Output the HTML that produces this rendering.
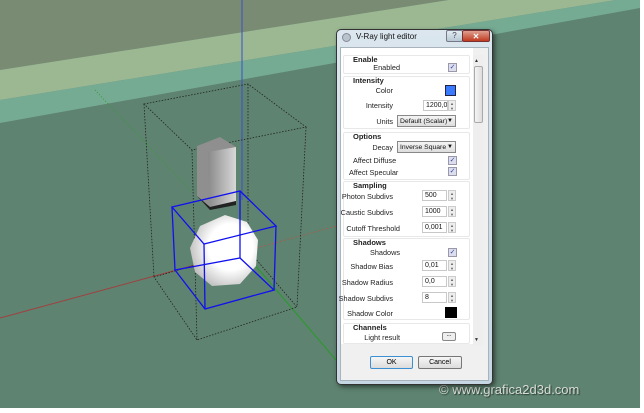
<!DOCTYPE html>
<html><head><style>
*{margin:0;padding:0;box-sizing:border-box}
body{width:644px;height:413px;background:#fff;position:relative;overflow:hidden;font-family:"Liberation Sans",sans-serif}
.a{position:absolute}
.lb{position:absolute;font-size:7.3px;color:#222;text-align:right;width:100px;white-space:nowrap}
.hd{position:absolute;left:353px;font-size:7.5px;font-weight:bold;color:#222}
.grp{position:absolute;left:343px;width:127px;border:1px solid #e8e8e8;border-radius:2px}
.fld{position:absolute;left:422px;width:25px;height:11px;border:1px solid #c8c8c8;background:#fff;font-size:7px;padding:1px 0 0 2px;color:#111;white-space:nowrap;overflow:hidden}
.sp{position:absolute;left:448px;width:8px;height:11px;border:1px solid #ccc;background:#eee;font-size:4px;line-height:5px;text-align:center;color:#666}
.cb{position:absolute;left:448px;width:9px;height:9px;border:1px solid #99a;background:#dde;font-size:7px;line-height:8px;text-align:center;color:#2a4aa0}
.dd{position:absolute;left:397px;width:59px;height:12px;border:1px solid #888;background:linear-gradient(#f4f4f4,#ddd);font-size:6.8px;padding:2px 0 0 2px;color:#111;white-space:nowrap;overflow:hidden}
.dd:after{content:"▼";position:absolute;right:2px;top:2px;font-size:6px;background:#e6e6e6}
.btn{position:absolute;top:356px;height:13px;border:1px solid #777;border-radius:2px;background:linear-gradient(#f6f6f6,#dcdcdc);font-size:7px;text-align:center;line-height:11px}
</style></head><body>
<svg class="a" style="left:0;top:0" width="640" height="408">
<defs>
<radialGradient id="sg" cx="0.6" cy="0.45" r="0.65"><stop offset="0.5" stop-color="#fff"/><stop offset="1" stop-color="#b8b8b8"/></radialGradient>
<linearGradient id="cg" x1="0" x2="1"><stop offset="0" stop-color="#8a8a8a"/><stop offset="1" stop-color="#d8d8d8"/></linearGradient>
</defs>
<rect width="640" height="408" fill="#5e8370"/>
<polygon points="0,0 640,0 640,-30 340,17 0,70" fill="#7a8b73"/>
<polygon points="0,70 340,17 640,-30 640,-4 340,45 0,100" fill="#9cb893"/>
<polygon points="0,100 340,45 640,-4 640,8 340,62 0,123" fill="#76ab93"/>
<line x1="0" y1="318" x2="195" y2="265" stroke="#a04040" stroke-width="1"/>
<line x1="195" y1="265" x2="340" y2="225" stroke="#a06050" stroke-dasharray="2,2"/>
<line x1="95" y1="90" x2="192" y2="192" stroke="#3a9a3a" stroke-dasharray="1,2"/>
<line x1="255" y1="265" x2="336" y2="360" stroke="#2a9a2a"/>
<line x1="242" y1="0" x2="242" y2="200" stroke="#3a50c8"/>
<g fill="none" stroke="#222" stroke-dasharray="1.5,1.5" stroke-width=".8">
<polygon points="144,104 248,84 306,127 192,150"/>
<polygon points="154,277 248,250 297,307 197,340"/>
<line x1="144" y1="104" x2="154" y2="277"/><line x1="192" y1="150" x2="197" y2="340"/>
<line x1="306" y1="127" x2="297" y2="307"/><line x1="248" y1="84" x2="248" y2="250"/>
</g>
<polygon points="197,146 220,137 236,147 236,201 210,207 197,196" fill="#8f8f8f"/>
<polygon points="208,152 236,147 236,201 210,207" fill="url(#cg)"/>
<polygon points="197,196 210,207 236,201 236,205 210,210" fill="#222"/>
<polygon points="225,215 247,222 258,240 256,266 240,284 212,286 195,272 190,248 200,226" fill="url(#sg)"/>
<g fill="none" stroke="#1010f0" stroke-width="1.3">
<polygon points="172,207 240,191 276,226 204,244"/>
<polygon points="175,270 240,258 274,290 205,309"/>
<line x1="172" y1="207" x2="175" y2="270"/><line x1="204" y1="244" x2="205" y2="309"/>
<line x1="276" y1="226" x2="274" y2="290"/><line x1="240" y1="191" x2="240" y2="258"/>
</g>
</svg>
<div class="a" style="left:439px;top:382px;font-size:13px;color:#d8dcd8;text-shadow:1px 1px 1px #2a3a30">© www.grafica2d3d.com</div>
<div class="a" style="left:336px;top:29px;width:157px;height:356px;border:1px solid #333;border-radius:5px;background:linear-gradient(#dbe6ee,#c6d6e2);box-shadow:2px 2px 5px rgba(0,0,0,.5)"></div>
<div class="a" style="left:342px;top:33px;width:9px;height:9px;border-radius:50%;background:#b8c4cc;border:1px solid #889"></div>
<div class="a" style="left:356px;top:32px;font-size:8px;color:#111">V-Ray light editor</div>
<div class="a" style="left:446px;top:30px;width:17px;height:12px;border:1px solid #778;border-radius:2px;background:linear-gradient(#e4ecf2,#b8c8d4);font-size:8px;text-align:center;color:#445">?</div>
<div class="a" style="left:462px;top:30px;width:28px;height:12px;border:1px solid #733;border-radius:2px;background:linear-gradient(#e0a090,#c03a20);font-size:8px;text-align:center;color:#fff;font-weight:bold;line-height:11px">✕</div>
<div class="a" style="left:340px;top:47px;width:149px;height:334px;background:#f0f0f0;border:1px solid #a8b4bc"></div>
<div class="a" style="left:341px;top:48px;width:132px;height:296px;background:#fff"></div>
<div class="a" style="left:473px;top:55px;width:11px;height:291px;background:#eee"></div>
<div class="a" style="left:474px;top:58px;font-size:5px;color:#333">▲</div>
<div class="a" style="left:474px;top:66px;width:9px;height:57px;border:1px solid #aaa;border-radius:2px;background:linear-gradient(90deg,#f4f4f4,#ddd)"></div>
<div class="a" style="left:474px;top:337px;font-size:5px;color:#333">▼</div>

<div class="grp" style="top:55px;height:19px"></div>
<div class="grp" style="top:76px;height:53px"></div>
<div class="grp" style="top:132px;height:48px"></div>
<div class="grp" style="top:181px;height:56px"></div>
<div class="grp" style="top:238px;height:82px"></div>
<div class="grp" style="top:323px;height:21px"></div>

<div class="hd" style="top:55px">Enable</div>
<div class="lb" style="left:300px;top:63px">Enabled</div><div class="cb" style="top:63px">✓</div>
<div class="hd" style="top:76px">Intensity</div>
<div class="lb" style="left:293px;top:86px">Color</div>
<div class="a" style="left:445px;top:85px;width:11px;height:11px;background:#3a7aff;border:1px solid #224"></div>
<div class="lb" style="left:293px;top:101px">Intensity</div><div class="fld" style="top:100px;left:423px">1200,0</div><div class="sp" style="top:100px">▲<br>▼</div>
<div class="lb" style="left:293px;top:117px">Units</div><div class="dd" style="top:115px">Default (Scalar)</div>
<div class="hd" style="top:132px">Options</div>
<div class="lb" style="left:293px;top:143px">Decay</div><div class="dd" style="top:141px">Inverse Square</div>
<div class="lb" style="top:156px;text-align:left;left:353px">Affect Diffuse</div><div class="cb" style="top:156px">✓</div>
<div class="lb" style="top:168px;text-align:left;left:349px">Affect Specular</div><div class="cb" style="top:167px">✓</div>
<div class="hd" style="top:181px">Sampling</div>
<div class="lb" style="left:293px;top:192px">Photon Subdivs</div><div class="fld" style="top:190px">500</div><div class="sp" style="top:190px">▲<br>▼</div>
<div class="lb" style="left:293px;top:208px">Caustic Subdivs</div><div class="fld" style="top:206px">1000</div><div class="sp" style="top:206px">▲<br>▼</div>
<div class="lb" style="left:300px;top:224px">Cutoff Threshold</div><div class="fld" style="top:222px">0,001</div><div class="sp" style="top:222px">▲<br>▼</div>
<div class="hd" style="top:238px">Shadows</div>
<div class="lb" style="left:300px;top:248px">Shadows</div><div class="cb" style="top:248px">✓</div>
<div class="lb" style="left:293px;top:262px">Shadow Bias</div><div class="fld" style="top:260px">0,01</div><div class="sp" style="top:260px">▲<br>▼</div>
<div class="lb" style="left:293px;top:278px">Shadow Radius</div><div class="fld" style="top:276px">0,0</div><div class="sp" style="top:276px">▲<br>▼</div>
<div class="lb" style="left:293px;top:294px">Shadow Subdivs</div><div class="fld" style="top:292px">8</div><div class="sp" style="top:292px">▲<br>▼</div>
<div class="lb" style="left:293px;top:309px">Shadow Color</div>
<div class="a" style="left:445px;top:307px;width:12px;height:11px;background:#000"></div>
<div class="hd" style="top:323px">Channels</div>
<div class="lb" style="left:300px;top:333px">Light result</div>
<div class="a" style="left:442px;top:332px;width:14px;height:9px;border:1px solid #888;border-radius:2px;background:#eee;font-size:6px;text-align:center;line-height:5px">...</div>
<div class="btn" style="left:370px;width:43px;border-color:#3c8fd0">OK</div>
<div class="btn" style="left:418px;width:44px">Cancel</div>
</body></html>
